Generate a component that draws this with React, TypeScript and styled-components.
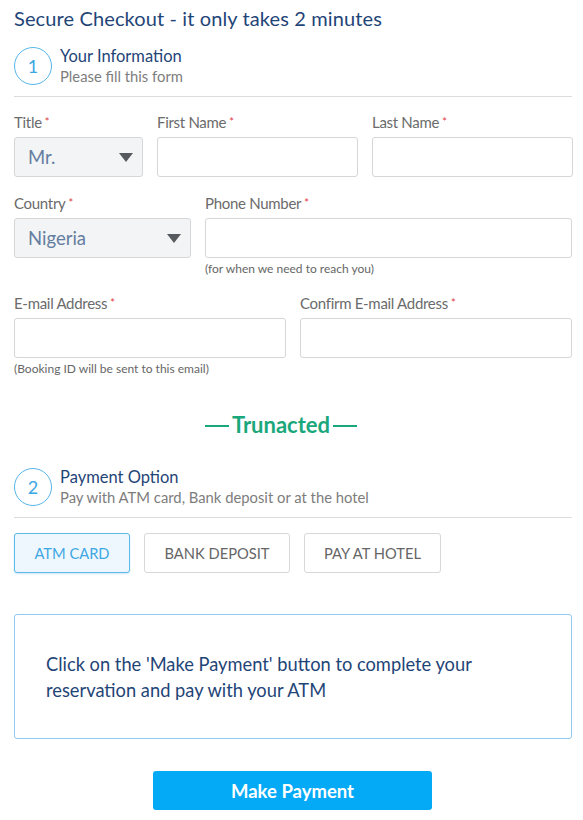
import React from "react";
import styled, { createGlobalStyle } from "styled-components";

const Global = createGlobalStyle`
  html, body { margin: 0; padding: 0; background: #fff; }
  body { font-family: Lato, "Open Sans", "Liberation Sans", sans-serif; }
  * { box-sizing: border-box; }
`;

const Page = styled.div`
  width: 583px;
  padding: 6px 11px 12px 14px;
`;

const Heading = styled.h1`
  margin: 0;
  font-size: 20px;
  line-height: 24px;
  font-weight: 400;
  letter-spacing: 0.12px;
  color: #1f4577;
`;

const Step = styled.div<{ $top: number }>`
  display: flex;
  align-items: center;
  gap: 8px;
  margin-top: ${(p) => p.$top}px;
  padding-bottom: 10px;
  border-bottom: 1px solid #dcdcdc;
`;

const Circle = styled.div`
  width: 38px;
  height: 38px;
  border-radius: 50%;
  border: 1.5px solid #55b6e9;
  color: #3aa6e2;
  font-size: 18px;
  display: flex;
  align-items: center;
  justify-content: center;
  flex-shrink: 0;
`;

const StepText = styled.div`
  display: flex;
  flex-direction: column;
`;

const StepTitle = styled.div`
  font-size: 16.5px;
  line-height: 20px;
  color: #1f4577;
`;

const StepSub = styled.div`
  font-size: 14.8px;
  line-height: 20px;
  color: #7d7d7d;
`;

const Row = styled.div<{ $cols: string; $top: number }>`
  display: grid;
  grid-template-columns: ${(p) => p.$cols};
  column-gap: 14px;
  margin-top: ${(p) => p.$top}px;
`;

const Field = styled.div`
  display: flex;
  flex-direction: column;
`;

const Label = styled.label`
  font-size: 15px;
  line-height: 18px;
  color: #6b6b6b;
  margin-bottom: 6px;
  letter-spacing: -0.3px;
`;

const Req = styled.span`
  color: #e0383e;
  font-size: 11px;
  vertical-align: top;
  margin-left: 3px;
`;

const Input = styled.div`
  height: 40px;
  border: 1px solid #d6d6d6;
  border-radius: 3px;
  background: #fff;
`;

const Select = styled.div`
  height: 40px;
  border: 1px solid #d6d6d6;
  border-radius: 3px;
  background: #f3f4f5;
  display: flex;
  align-items: center;
  justify-content: space-between;
  padding: 0 9px 0 13px;
  font-size: 18.5px;
  color: #647ea0;
`;

const Caret = styled.span`
  width: 0;
  height: 0;
  border-left: 7.5px solid transparent;
  border-right: 7.5px solid transparent;
  border-top: 9px solid #565a5f;
`;

const Helper = styled.div`
  font-size: 12px;
  line-height: 14px;
  color: #666;
  margin-top: 4px;
`;

const Truncated = styled.div`
  margin-top: 37px;
  padding-right: 24px;
  display: flex;
  justify-content: center;
  align-items: center;
  gap: 3px;
  font-size: 22px;
  line-height: 24px;
  font-weight: 700;
  color: #1ba77c;
`;

const Dash = styled.span`
  width: 24px;
  height: 2px;
  background: #1ba77c;
  margin-top: 1px;
`;

const Options = styled.div`
  display: flex;
  gap: 14px;
  margin-top: 15px;
`;

const Option = styled.button<{ $active?: boolean; $w: number }>`
  width: ${(p) => p.$w}px;
  height: 40px;
  border-radius: 3px;
  font-family: inherit;
  font-size: 14.7px;
  text-transform: uppercase;
  border: 1px solid ${(p) => (p.$active ? "#5cb9ea" : "#d8d8d8")};
  background: ${(p) => (p.$active ? "#eef7fd" : "#fff")};
  color: ${(p) => (p.$active ? "#3fa7e2" : "#666")};
  box-shadow: ${(p) => (p.$active ? "0 1px 2px rgba(60,160,220,0.25)" : "none")};
  padding: 0;
`;

const InfoBox = styled.div`
  margin-top: 41px;
  height: 125px;
  border: 1px solid #8fcbee;
  border-radius: 3px;
  padding: 36px 31px;
  font-size: 18.3px;
  line-height: 26px;
  color: #1f4577;
`;

const PayRow = styled.div`
  display: flex;
  margin-top: 32px;
  padding-left: 139px;
`;

const PayButton = styled.button`
  width: 279px;
  height: 39px;
  border: none;
  border-radius: 3px;
  background: #04aaf6;
  color: #fff;
  font-family: inherit;
  font-size: 18.5px;
  font-weight: 700;
`;

export default function App() {
  return (
    <>
      <Global />
      <Page>
        <Heading>Secure Checkout - it only takes 2 minutes</Heading>
        <Step $top={16}>
          <Circle>1</Circle>
          <StepText>
            <StepTitle>Your Information</StepTitle>
            <StepSub>Please fill this form</StepSub>
          </StepText>
        </Step>

        <Row $cols="129px 201px 201px" $top={16}>
          <Field>
            <Label>Title<Req>*</Req></Label>
            <Select>Mr.<Caret /></Select>
          </Field>
          <Field>
            <Label>First Name<Req>*</Req></Label>
            <Input />
          </Field>
          <Field>
            <Label>Last Name<Req>*</Req></Label>
            <Input />
          </Field>
        </Row>

        <Row $cols="177px 1fr" $top={17}>
          <Field>
            <Label>Country<Req>*</Req></Label>
            <Select>Nigeria<Caret /></Select>
          </Field>
          <Field>
            <Label>Phone Number<Req>*</Req></Label>
            <Input />
            <Helper>(for when we need to reach you)</Helper>
          </Field>
        </Row>

        <Row $cols="1fr 1fr" $top={18}>
          <Field>
            <Label>E-mail Address<Req>*</Req></Label>
            <Input />
            <Helper>(Booking ID will be sent to this email)</Helper>
          </Field>
          <Field>
            <Label>Confirm E-mail Address<Req>*</Req></Label>
            <Input />
          </Field>
        </Row>

        <Truncated>
          <Dash />
          Trunacted
          <Dash />
        </Truncated>

        <Step $top={30}>
          <Circle>2</Circle>
          <StepText>
            <StepTitle>Payment Option</StepTitle>
            <StepSub>Pay with ATM card, Bank deposit or at the hotel</StepSub>
          </StepText>
        </Step>

        <Options>
          <Option $active $w={116}>ATM Card</Option>
          <Option $w={146}>Bank Deposit</Option>
          <Option $w={137}>Pay at Hotel</Option>
        </Options>

        <InfoBox>
          Click on the 'Make Payment' button to complete your reservation and pay with your ATM
        </InfoBox>

        <PayRow>
          <PayButton>Make Payment</PayButton>
        </PayRow>
      </Page>
    </>
  );
}
